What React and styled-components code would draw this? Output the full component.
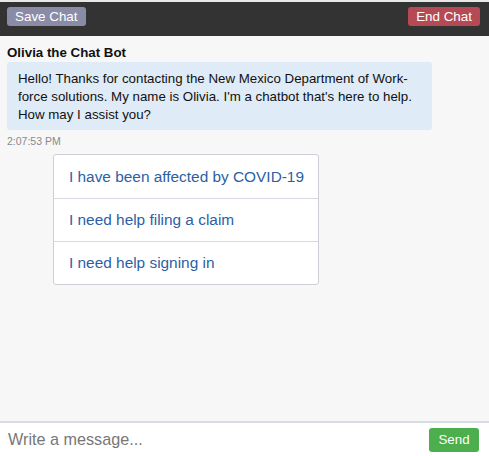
import React from 'react'
import styled, { createGlobalStyle } from 'styled-components'

const Global = createGlobalStyle`
  html, body { margin: 0; padding: 0; height: 100%; }
  body { font-family: "Liberation Sans", Arial, sans-serif; background: #f7f7f7; }
  #root { height: 100%; }
`

const Page = styled.div`
  height: 456px;
  display: flex;
  flex-direction: column;
  background: #f7f7f7;
  border-top: 2px solid #e8e8e8;
  box-sizing: border-box;
`

const TopBar = styled.div`
  height: 34px;
  background: #333333;
  display: flex;
  align-items: flex-start;
  justify-content: space-between;
  padding: 5px 9px 0 7px;
  box-sizing: border-box;
`

const BarButton = styled.button`
  height: 19px;
  padding: 0 8px;
  border: none;
  border-radius: 3px;
  background: ${({ $bg }) => $bg};
  color: #fff;
  font-family: "Liberation Sans", Arial, sans-serif;
  font-size: 13.4px;
  line-height: 19px;
  cursor: pointer;
`

const Messages = styled.div`
  flex: 1;
  padding: 7px 7px 0 7px;
`

const Sender = styled.div`
  font-weight: bold;
  font-size: 13.3px;
  color: #111;
  line-height: 18px;
  margin-top: 1px;
`

const Bubble = styled.div`
  width: 425px;
  box-sizing: border-box;
  background: #dfebf6;
  border-radius: 3px;
  padding: 8px 11px 6px 11px;
  font-size: 13.3px;
  line-height: 18px;
  color: #111;
`

const Time = styled.div`
  font-size: 10.5px;
  color: #8a8a8a;
  margin-top: 5px;
  line-height: 13px;
`

const Options = styled.div`
  margin: 6px 0 0 46px;
  width: 266px;
  background: #fff;
  border: 1px solid #cfcfd8;
  border-radius: 3px;
  box-sizing: border-box;
`

const Option = styled.div`
  height: 43px;
  display: flex;
  align-items: center;
  padding: 0 15px;
  font-size: 15.4px;
  white-space: nowrap;
  color: #2b5fa6;
  border-top: ${({ $first }) => ($first ? 'none' : '1px solid #d8d8e0')};
  box-sizing: border-box;
  cursor: pointer;
`

const Composer = styled.div`
  height: 35px;
  background: #fff;
  border-top: 2px solid #d7dbe2;
  display: flex;
  align-items: center;
  justify-content: space-between;
  padding: 0 10px 0 8px;
  box-sizing: border-box;
`

const Input = styled.input`
  flex: 1;
  border: none;
  outline: none;
  background: transparent;
  font-family: "Liberation Sans", Arial, sans-serif;
  font-size: 16.2px;
  padding: 0;
  color: #333;
  &::placeholder { color: #777; }
`

const Send = styled.button`
  width: 50px;
  height: 24px;
  border: none;
  border-radius: 3px;
  background: #4cae4c;
  color: #fff;
  font-family: "Liberation Sans", Arial, sans-serif;
  font-size: 13.3px;
`

const replies = [
  'I have been affected by COVID-19',
  'I need help filing a claim',
  'I need help signing in',
]

export default function App() {
  return (
    <Page>
      <Global />
      <TopBar>
        <BarButton $bg="#8a8ba6">Save Chat</BarButton>
        <BarButton $bg="#b54a54">End Chat</BarButton>
      </TopBar>
      <Messages>
        <Sender>Olivia the Chat Bot</Sender>
        <Bubble>
          Hello! Thanks for contacting the New Mexico Department of Work-force solutions. My name is Olivia. I'm a chatbot that's here to help. How may I assist you?
        </Bubble>
        <Time>2:07:53 PM</Time>
        <Options>
          {replies.map((r, i) => (
            <Option key={r} $first={i === 0}>{r}</Option>
          ))}
        </Options>
      </Messages>
      <Composer>
        <Input placeholder="Write a message..." />
        <Send>Send</Send>
      </Composer>
    </Page>
  )
}
